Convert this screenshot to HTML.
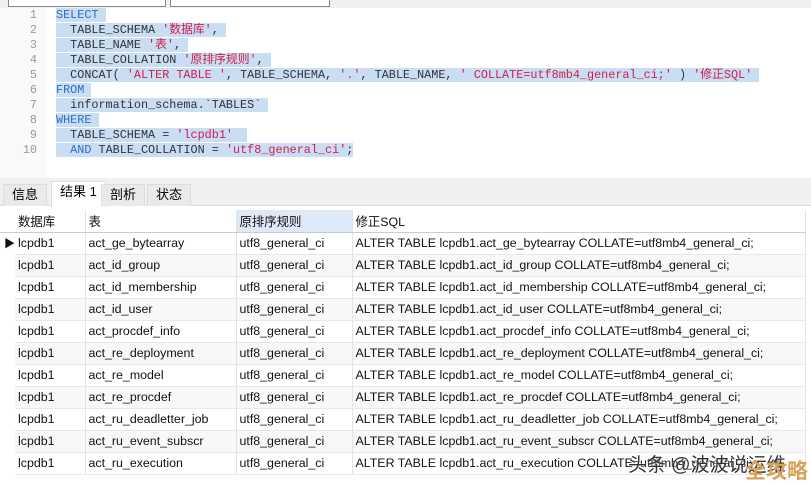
<!DOCTYPE html>
<html><head><meta charset="utf-8"><style>
*{margin:0;padding:0;box-sizing:border-box}
body{width:811px;height:485px;overflow:hidden;background:#fff;position:relative;font-family:"Liberation Sans","Noto Sans CJK SC",sans-serif}
.top{position:absolute;left:0;top:0;width:811px;height:8px;background:#f0f0f0}
.top div{position:absolute;top:-2px;height:9px;border:1px solid #888;background:#fff}
.gut{position:absolute;left:0;top:8px;width:46px;height:170px;background:#f9f9f9}
.code{position:absolute;left:0;top:8px;font-family:"Liberation Mono","Noto Sans CJK SC",monospace;font-size:11.8px;color:#333}
.ln{position:absolute;left:0;width:37px;text-align:right;color:#999;height:15px;line-height:15px}
.cl{position:absolute;left:56px;height:15px;line-height:15px;white-space:pre}
.cl span.s{background:#c9ddf3}
.k{color:#2a6fc6}.r{color:#d0204f}
.tabbar{position:absolute;left:0;top:178px;width:811px;height:28px;background:#f0f0f0;border-bottom:1px solid #ddd}
.tab{position:absolute;top:6px;height:22px;line-height:20px;font-size:13px;padding:0 8px;border:1px solid #ddd;border-bottom:none;background:#eaeaea}
.tab.a{background:#fff;top:3px;height:26px}
table{position:absolute;left:0;top:210px;border-collapse:collapse;font-size:12.4px;color:#111;table-layout:fixed}
td{height:22px;padding:0 3px;border-right:1px solid #e4e4e4;border-bottom:1px solid #e8e8e8;white-space:nowrap;overflow:hidden}
tr:nth-child(odd) td{background:#f8f8f8}
tr.h td{background:#fff;border-bottom:1px solid #ccc}
td.m{border:none;background:#fff!important;width:15px;padding:0}
</style></head><body>
<div class="top"><div style="left:8px;width:158px"></div><div style="left:170px;width:160px"></div></div>
<div class="gut"></div>
<div class="code">
<div class="ln" style="top:0">1</div><div class="ln" style="top:15px">2</div><div class="ln" style="top:30px">3</div><div class="ln" style="top:45px">4</div><div class="ln" style="top:60px">5</div><div class="ln" style="top:75px">6</div><div class="ln" style="top:90px">7</div><div class="ln" style="top:105px">8</div><div class="ln" style="top:120px">9</div><div class="ln" style="top:135px">10</div>
<div class="cl" style="top:0"><span class="s"><span class="k">SELECT</span> </span></div>
<div class="cl" style="top:15px"><span class="s">  TABLE_SCHEMA <span class="r">'数据库'</span>, </span></div>
<div class="cl" style="top:30px"><span class="s">  TABLE_NAME <span class="r">'表'</span>, </span></div>
<div class="cl" style="top:45px"><span class="s">  TABLE_COLLATION <span class="r">'原排序规则'</span>, </span></div>
<div class="cl" style="top:60px"><span class="s">  CONCAT( <span class="r">'ALTER TABLE '</span>, TABLE_SCHEMA, <span class="r">'.'</span>, TABLE_NAME, <span class="r">' COLLATE=utf8mb4_general_ci;'</span> ) <span class="r">'修正SQL'</span> </span></div>
<div class="cl" style="top:75px"><span class="s"><span class="k">FROM</span> </span></div>
<div class="cl" style="top:90px"><span class="s">  information_schema.`TABLES` </span></div>
<div class="cl" style="top:105px"><span class="s"><span class="k">WHERE</span> </span></div>
<div class="cl" style="top:120px"><span class="s">  TABLE_SCHEMA = <span class="r">'lcpdb1'</span>  </span></div>
<div class="cl" style="top:135px"><span class="s">  <span class="k">AND</span> TABLE_COLLATION = <span class="r">'utf8_general_ci'</span>;</span></div>
</div>
<div class="tabbar">
<div class="tab" style="left:3px">信息</div>
<div class="tab a" style="left:51px">结果 1</div>
<div class="tab" style="left:101px">剖析</div>
<div class="tab" style="left:147px">状态</div>
</div>
<table>
<colgroup><col style="width:15px"><col style="width:70px"><col style="width:151px"><col style="width:116px"><col style="width:453px"></colgroup>
<tr class="h"><td class="m"></td><td>数据库</td><td>表</td><td style="background:#dde9f6">原排序规则</td><td>修正SQL</td></tr>
<tr><td class="m" style="font-size:11px;padding-left:4px">▶</td><td>lcpdb1</td><td>act_ge_bytearray</td><td>utf8_general_ci</td><td>ALTER TABLE lcpdb1.act_ge_bytearray COLLATE=utf8mb4_general_ci;</td></tr>
<tr><td class="m"></td><td>lcpdb1</td><td>act_id_group</td><td>utf8_general_ci</td><td>ALTER TABLE lcpdb1.act_id_group COLLATE=utf8mb4_general_ci;</td></tr>
<tr><td class="m"></td><td>lcpdb1</td><td>act_id_membership</td><td>utf8_general_ci</td><td>ALTER TABLE lcpdb1.act_id_membership COLLATE=utf8mb4_general_ci;</td></tr>
<tr><td class="m"></td><td>lcpdb1</td><td>act_id_user</td><td>utf8_general_ci</td><td>ALTER TABLE lcpdb1.act_id_user COLLATE=utf8mb4_general_ci;</td></tr>
<tr><td class="m"></td><td>lcpdb1</td><td>act_procdef_info</td><td>utf8_general_ci</td><td>ALTER TABLE lcpdb1.act_procdef_info COLLATE=utf8mb4_general_ci;</td></tr>
<tr><td class="m"></td><td>lcpdb1</td><td>act_re_deployment</td><td>utf8_general_ci</td><td>ALTER TABLE lcpdb1.act_re_deployment COLLATE=utf8mb4_general_ci;</td></tr>
<tr><td class="m"></td><td>lcpdb1</td><td>act_re_model</td><td>utf8_general_ci</td><td>ALTER TABLE lcpdb1.act_re_model COLLATE=utf8mb4_general_ci;</td></tr>
<tr><td class="m"></td><td>lcpdb1</td><td>act_re_procdef</td><td>utf8_general_ci</td><td>ALTER TABLE lcpdb1.act_re_procdef COLLATE=utf8mb4_general_ci;</td></tr>
<tr><td class="m"></td><td>lcpdb1</td><td>act_ru_deadletter_job</td><td>utf8_general_ci</td><td>ALTER TABLE lcpdb1.act_ru_deadletter_job COLLATE=utf8mb4_general_ci;</td></tr>
<tr><td class="m"></td><td>lcpdb1</td><td>act_ru_event_subscr</td><td>utf8_general_ci</td><td>ALTER TABLE lcpdb1.act_ru_event_subscr COLLATE=utf8mb4_general_ci;</td></tr>
<tr><td class="m"></td><td>lcpdb1</td><td>act_ru_execution</td><td>utf8_general_ci</td><td>ALTER TABLE lcpdb1.act_ru_execution COLLATE=utf8mb4_general_ci;</td></tr>
</table>
<div style="position:absolute;left:628px;top:450px;font-size:19px;color:#333;text-shadow:0 0 2px #fff">头条 @波波说运维</div>
<div style="position:absolute;left:745px;top:455px;font-size:21px;font-weight:bold;color:#d9a15a">全攻略</div>
</body></html>
